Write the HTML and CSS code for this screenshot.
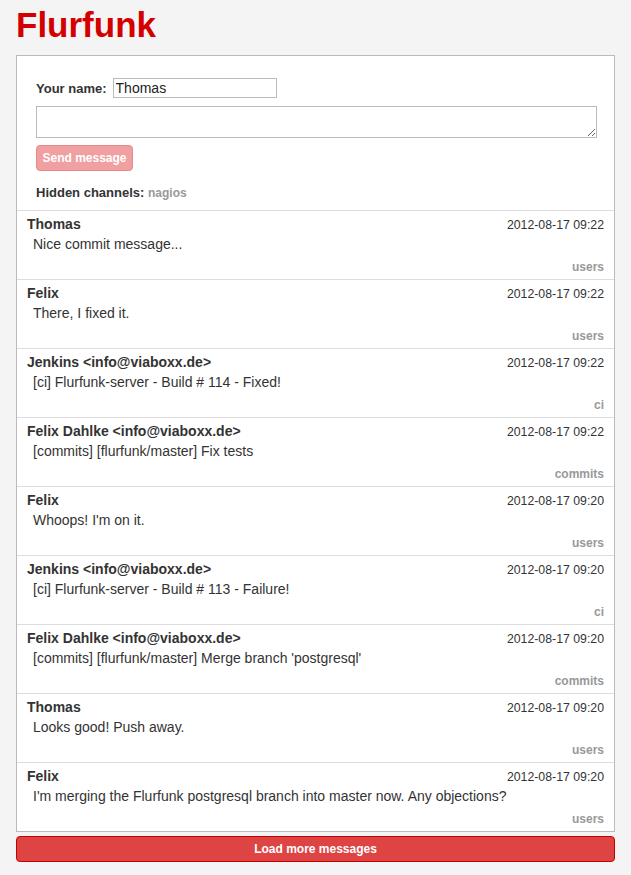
FILE: index.html
```html
<!DOCTYPE html>
<html lang="en">
<head>
  <meta charset="UTF-8">
  <title>Flurfunk</title>
  <link rel="stylesheet" href="styles.css">
</head>
<body>
  <h1 class="title">Flurfunk</h1>

  <div class="panel">
    <form class="send-form">
      <div class="name-row">
        <label for="author">Your name:</label>
        <input type="text" id="author" value="Thomas">
      </div>
      <textarea class="message-box"></textarea>
      <button type="button" class="send-btn" disabled>Send message</button>
      <div class="hidden-channels">Hidden channels: <span class="channel-name">nagios</span></div>
    </form>

    <div class="messages">
      <div class="message">
        <div class="message-head"><span class="author">Thomas</span><span class="date">2012-08-17 09:22</span></div>
        <div class="body">Nice commit message...</div>
        <div class="channel">users</div>
      </div>
      <div class="message">
        <div class="message-head"><span class="author">Felix</span><span class="date">2012-08-17 09:22</span></div>
        <div class="body">There, I fixed it.</div>
        <div class="channel">users</div>
      </div>
      <div class="message">
        <div class="message-head"><span class="author">Jenkins &lt;info@viaboxx.de&gt;</span><span class="date">2012-08-17 09:22</span></div>
        <div class="body">[ci] Flurfunk-server - Build # 114 - Fixed!</div>
        <div class="channel">ci</div>
      </div>
      <div class="message">
        <div class="message-head"><span class="author">Felix Dahlke &lt;info@viaboxx.de&gt;</span><span class="date">2012-08-17 09:22</span></div>
        <div class="body">[commits] [flurfunk/master] Fix tests</div>
        <div class="channel">commits</div>
      </div>
      <div class="message">
        <div class="message-head"><span class="author">Felix</span><span class="date">2012-08-17 09:20</span></div>
        <div class="body">Whoops! I'm on it.</div>
        <div class="channel">users</div>
      </div>
      <div class="message">
        <div class="message-head"><span class="author">Jenkins &lt;info@viaboxx.de&gt;</span><span class="date">2012-08-17 09:20</span></div>
        <div class="body">[ci] Flurfunk-server - Build # 113 - Failure!</div>
        <div class="channel">ci</div>
      </div>
      <div class="message">
        <div class="message-head"><span class="author">Felix Dahlke &lt;info@viaboxx.de&gt;</span><span class="date">2012-08-17 09:20</span></div>
        <div class="body">[commits] [flurfunk/master] Merge branch 'postgresql'</div>
        <div class="channel">commits</div>
      </div>
      <div class="message">
        <div class="message-head"><span class="author">Thomas</span><span class="date">2012-08-17 09:20</span></div>
        <div class="body">Looks good! Push away.</div>
        <div class="channel">users</div>
      </div>
      <div class="message">
        <div class="message-head"><span class="author">Felix</span><span class="date">2012-08-17 09:20</span></div>
        <div class="body">I'm merging the Flurfunk postgresql branch into master now. Any objections?</div>
        <div class="channel">users</div>
      </div>
    </div>
  </div>

  <button type="button" class="load-more">Load more messages</button>
</body>
</html>
```

FILE: styles.css
```css
body {
  font-family: "Liberation Sans", Arial, sans-serif;
  margin: 0;
  padding: 0 16px;
  background-color: #f4f4f4;
  color: #333;
}

.title {
  margin: 0;
  padding-top: 4px;
  height: 51px;
  font-size: 35px;
  line-height: 42px;
  color: #d40000;
}

.panel {
  background-color: #fff;
  border: 1px solid #bbb;
}

/* send form */
.send-form {
  padding: 22px 17px 9px 19px;
}

.name-row {
  display: flex;
  align-items: center;
  gap: 6px;
  font-size: 13px;
  font-weight: bold;
}

.name-row input {
  width: 158px;
  height: 14px;
  padding: 2px;
  border: 1px solid #bbb;
  font-family: inherit;
  font-size: 14px;
  color: #222;
}

.message-box {
  display: block;
  box-sizing: border-box;
  width: 100%;
  height: 32px;
  margin-top: 8px;
  border: 1px solid #bbb;
  resize: vertical;
  font-family: inherit;
}

.send-btn {
  display: block;
  margin-top: 7px;
  height: 26px;
  width: 97px;
  padding: 0;
  background-color: #f0a0a0;
  border: 1px solid #e88888;
  border-radius: 4px;
  color: #fff;
  font-family: inherit;
  font-size: 12px;
  font-weight: bold;
}

.hidden-channels {
  margin-top: 14px;
  font-size: 13px;
  font-weight: bold;
  line-height: 16px;
}

.channel-name {
  font-size: 12px;
  color: #999;
}

/* message list */
.message {
  border-top: 1px solid #ddd;
  padding: 4px 10px 5px 10px;
}

.message-head {
  display: flex;
  justify-content: space-between;
  align-items: baseline;
  height: 18px;
  line-height: 18px;
}

.author {
  font-size: 14px;
  font-weight: bold;
}

.date {
  font-size: 12.3px;
}

.body {
  margin-top: 1px;
  font-size: 14px;
  line-height: 20px;
  padding-left: 6px;
}

.channel {
  margin-top: 7px;
  text-align: right;
  font-size: 12px;
  font-weight: bold;
  line-height: 13px;
  color: #999;
}

.load-more {
  display: block;
  width: 100%;
  margin-top: 4px;
  height: 26px;
  background-color: #de4444;
  border: 1px solid #c40000;
  border-radius: 4px;
  color: #fff;
  font-family: inherit;
  font-size: 12px;
  font-weight: bold;
}
```
